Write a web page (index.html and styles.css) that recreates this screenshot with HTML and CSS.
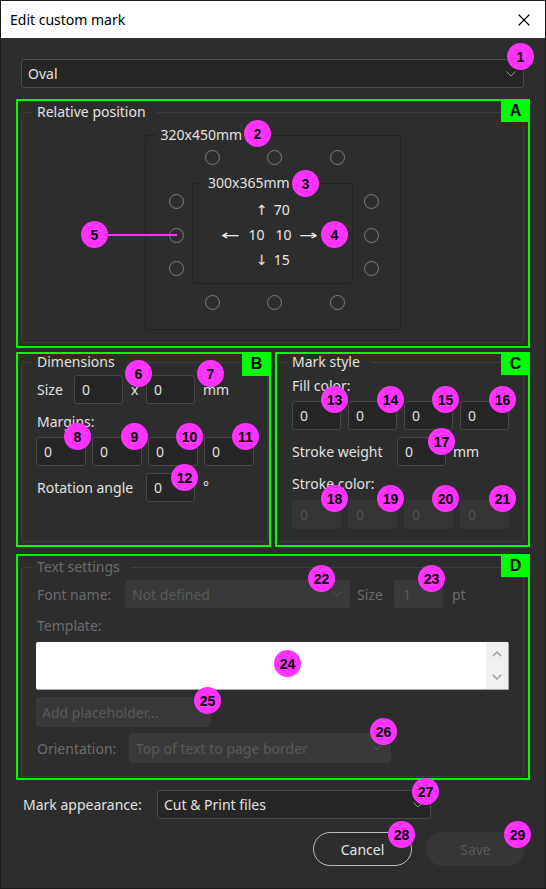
FILE: index.html
```html
<!DOCTYPE html>
<html lang="en">
<head>
<meta charset="utf-8">
<title>Edit custom mark</title>
<link rel="stylesheet" href="styles.css">
</head>
<body>
<div class="window">
  <div class="titlebar">
    <span class="title">Edit custom mark</span>
    <svg class="close" width="12" height="12" viewBox="0 0 12 12"><path d="M0.5 0.5 L11.5 11.5 M11.5 0.5 L0.5 11.5" stroke="#000" stroke-width="1.1" fill="none"/></svg>
  </div>

  <div class="content">
    <div class="combo main-combo">
      <span>Oval</span>
      <svg class="chev" width="10" height="6" viewBox="0 0 10 6"><polyline points="0.5,0.5 5,5 9.5,0.5" fill="none" stroke="#8c8c8c" stroke-width="1"/></svg>
    </div>

    <section class="hl hl-a">
      <span class="tag">A</span>
      <fieldset class="group group-a">
        <legend>Relative position</legend>
        <div class="diagram">
          <fieldset class="rect outer-rect">
            <legend>320x450mm</legend>
            <fieldset class="rect inner-rect">
              <legend>300x365mm</legend>
              <div class="offsets">
                <div class="off-row"><span class="va">↑</span><span>70</span></div>
                <div class="off-row mid"><span class="ha">←</span><span class="n1">10</span><span class="n2">10</span><span class="ha">→</span></div>
                <div class="off-row"><span class="va">↓</span><span>15</span></div>
              </div>
            </fieldset>
          </fieldset>
          <span class="pin t1"></span><span class="pin t2"></span><span class="pin t3"></span>
          <span class="pin l1"></span><span class="pin l2"></span><span class="pin l3"></span>
          <span class="pin r1"></span><span class="pin r2"></span><span class="pin r3"></span>
          <span class="pin bt1"></span><span class="pin bt2"></span><span class="pin bt3"></span>
        </div>
      </fieldset>
    </section>

    <div class="row-bc">
      <section class="hl hl-b">
        <span class="tag">B</span>
        <fieldset class="group group-b">
          <legend>Dimensions</legend>
          <div class="dims">
            <div class="frow size-row">
              <span class="lbl-size">Size</span>
              <span class="field">0</span>
              <span class="times">x</span>
              <span class="field">0</span>
              <span class="unit">mm</span>
            </div>
            <div class="line margins-lbl">Margins:</div>
            <div class="quad quad-b">
              <span class="field w50">0</span>
              <span class="field w50">0</span>
              <span class="field w50">0</span>
              <span class="field w50">0</span>
            </div>
            <div class="frow rot-row">
              <span class="lbl-rot">Rotation angle</span>
              <span class="field">0</span>
              <span class="deg">°</span>
            </div>
          </div>
        </fieldset>
      </section>

      <section class="hl hl-c">
        <span class="tag">C</span>
        <fieldset class="group group-c">
          <legend>Mark style</legend>
          <div class="mstyle">
            <div class="line fill-lbl">Fill color:</div>
            <div class="quad quad-c">
              <span class="field">0</span>
              <span class="field">0</span>
              <span class="field">0</span>
              <span class="field">0</span>
            </div>
            <div class="frow sw-row">
              <span class="lbl-sw">Stroke weight</span>
              <span class="field">0</span>
              <span class="unit2">mm</span>
            </div>
            <div class="line sc-lbl">Stroke color:</div>
            <div class="quad quad-c quad-dis">
              <span class="field dis">0</span>
              <span class="field dis">0</span>
              <span class="field dis">0</span>
              <span class="field dis">0</span>
            </div>
          </div>
        </fieldset>
      </section>
    </div>

    <section class="hl hl-d">
      <span class="tag">D</span>
      <fieldset class="group group-d">
        <legend>Text settings</legend>
        <div class="tset">
          <div class="frow font-row">
            <span class="lbl-font">Font name:</span>
            <div class="combo dcombo font-combo">
              <span>Not defined</span>
              <svg class="chev" width="10" height="6" viewBox="0 0 10 6"><polyline points="0.5,0.5 5,5 9.5,0.5" fill="none" stroke="#555" stroke-width="1"/></svg>
            </div>
            <span class="lbl-sz">Size</span>
            <span class="field dfield">1</span>
            <span class="pt">pt</span>
          </div>
          <div class="line tpl-lbl">Template:</div>
          <div class="textarea">
            <div class="scrollbar">
              <svg width="10" height="6" viewBox="0 0 10 6"><polyline points="0.8,5.2 5,1 9.2,5.2" fill="none" stroke="#a8a8a8" stroke-width="1.6"/></svg>
              <svg width="10" height="6" viewBox="0 0 10 6"><polyline points="0.8,0.8 5,5 9.2,0.8" fill="none" stroke="#a8a8a8" stroke-width="1.6"/></svg>
            </div>
          </div>
          <div class="addbtn">Add placeholder...</div>
          <div class="frow orient-row">
            <span class="lbl-orient">Orientation:</span>
            <div class="combo dcombo orient-combo">
              <span>Top of text to page border</span>
              <svg class="chev" width="10" height="6" viewBox="0 0 10 6"><polyline points="0.5,0.5 5,5 9.5,0.5" fill="none" stroke="#555" stroke-width="1"/></svg>
            </div>
          </div>
        </div>
      </fieldset>
    </section>

    <div class="frow appear-row">
      <span class="lbl-appear">Mark appearance:</span>
      <div class="combo appear-combo">
        <span>Cut &amp; Print files</span>
        <svg class="chev" width="10" height="6" viewBox="0 0 10 6"><polyline points="0.5,0.5 5,5 9.5,0.5" fill="none" stroke="#8c8c8c" stroke-width="1"/></svg>
      </div>
    </div>

    <div class="buttons">
      <div class="btn cancel">Cancel</div>
      <div class="btn save">Save</div>
    </div>
  </div>

  <div class="overlay">
    <span class="leader"></span>
    <span class="badge b1">1</span>
    <span class="badge b2">2</span>
    <span class="badge b3">3</span>
    <span class="badge b4">4</span>
    <span class="badge b5">5</span>
    <span class="badge b6">6</span>
    <span class="badge b7">7</span>
    <span class="badge b8">8</span>
    <span class="badge b9">9</span>
    <span class="badge b10">10</span>
    <span class="badge b11">11</span>
    <span class="badge b12">12</span>
    <span class="badge b13">13</span>
    <span class="badge b14">14</span>
    <span class="badge b15">15</span>
    <span class="badge b16">16</span>
    <span class="badge b17">17</span>
    <span class="badge b18">18</span>
    <span class="badge b19">19</span>
    <span class="badge b20">20</span>
    <span class="badge b21">21</span>
    <span class="badge b22">22</span>
    <span class="badge b23">23</span>
    <span class="badge b24">24</span>
    <span class="badge b25">25</span>
    <span class="badge b26">26</span>
    <span class="badge b27">27</span>
    <span class="badge b28">28</span>
    <span class="badge b29">29</span>
  </div>
</div>
</body>
</html>
```

FILE: styles.css
```css
* { box-sizing: border-box; }
html, body { margin: 0; padding: 0; background: #2d2d2d; }
body {
  font-family: "Noto Sans", "DejaVu Sans", sans-serif;
  font-size: 14px;
  color: #e2e2e2;
}
.window {
  position: relative;
  width: 546px;
  height: 889px;
  border: 1px solid #1b1b1b;
  background: #2d2d2d;
  overflow: hidden;
}
.titlebar {
  height: 37px;
  background: #ffffff;
  color: #000;
  display: flex;
  align-items: center;
  justify-content: space-between;
  padding: 0 15px 0 9px;
}
.title { line-height: 20px; }
.close { display: block; }

.content { padding: 0 15px; }

.combo {
  display: flex;
  align-items: center;
  justify-content: space-between;
  height: 29px;
  background: #262626;
  border: 1px solid #4a4a4a;
  border-radius: 3px;
  padding: 0 7px 0 6px;
  white-space: nowrap;
}
.chev { display: block; flex: none; }
.main-combo { margin: 21px 6px 0 5px; }

.hl { position: relative; border: 2px solid #00ff00; }
.tag {
  position: absolute;
  top: -2px;
  right: -2px;
  width: 29px;
  height: 23px;
  background: #00ff00;
  color: #000;
  font: bold 16px "Liberation Sans", Arial, sans-serif;
  display: flex;
  align-items: center;
  justify-content: center;
  z-index: 2;
}
.hl-b .tag { height: 24px; }

.group {
  margin: 0;
  padding: 0;
  border: 1px solid #3d3d3d;
  border-radius: 3px;
  min-width: 0;
}
.group > legend {
  margin-left: 10px;
  padding: 0 11px 0 5px;
  line-height: 16px;
}
.hl-a { margin-top: 11px; height: 249px; }
.group-a { margin: 3px 4px 3px 3px; height: 239px; }

.diagram { position: relative; width: 256px; height: 203px; margin: 7px auto 0; }
.rect {
  margin: 0;
  padding: 0;
  border: 1px solid #222222;
  border-radius: 3px;
  min-width: 0;
}
.rect > legend { margin-left: 10px; padding: 0 4px 0 5px; line-height: 16px; }
.outer-rect { width: 256px; height: 203px; }
.inner-rect { width: 161px; height: 109px; margin: 32px auto 0; }
.offsets { padding-top: 6px; display: flex; flex-direction: column; align-items: center; color: #e8e8e8; }
.off-row { display: flex; align-items: center; gap: 6px; height: 25px; padding-left: 1px; }
.off-row.mid { gap: 0; padding-left: 0; padding-right: 6px; }
.va { font-family: "DejaVu Sans", sans-serif; font-size: 14px; }
.ha {
  display: inline-block;
  width: 19px;
  text-align: center;
  font-family: "DejaVu Sans", sans-serif;
  transform: scaleX(1.6);
}
.n1 { margin-left: 8px; }
.n2 { margin-left: 11px; margin-right: 7px; }

.pin {
  position: absolute;
  width: 15px;
  height: 15px;
  border: 1px solid #7c7c7c;
  border-radius: 50%;
}
.t1 { left: 60.5px; top: 22.5px; }
.t2 { left: 122.5px; top: 22.5px; }
.t3 { left: 185.5px; top: 22.5px; }
.bt1 { left: 60.5px; top: 167.5px; }
.bt2 { left: 122.5px; top: 167.5px; }
.bt3 { left: 185.5px; top: 167.5px; }
.l1 { left: 24px; top: 66.5px; }
.l2 { left: 24px; top: 100.5px; }
.l3 { left: 24px; top: 133.5px; }
.r1 { left: 219px; top: 66.5px; }
.r2 { left: 219px; top: 100.5px; }
.r3 { left: 219px; top: 133.5px; }

.row-bc { display: flex; gap: 4px; margin-top: 4px; }
.hl-b, .hl-c { width: 255px; height: 195px; }
.group-b { margin: 0 1px 3px 3px; height: 188px; }
.group-c { margin: 0 4px 3px 0; height: 188px; }
.group-c > legend { margin-left: 9px; }

.frow { display: flex; align-items: center; }
.line { line-height: 16px; white-space: nowrap; }
.field {
  flex: none;
  width: 49px;
  height: 29px;
  background: #262626;
  border: 1px solid #474747;
  border-radius: 3px;
  padding-left: 7px;
  display: flex;
  align-items: center;
}
.field.w50 { width: 50px; }
.field.dis { background: #353535; border-color: #353535; color: #525252; }

.dims { padding-left: 15px; }
.size-row { margin-top: 5px; }
.lbl-size { width: 37px; }
.times { margin-left: 8px; width: 7px; }
.size-row .times + .field { margin-left: 8px; }
.unit { margin-left: 8px; }
.margins-lbl { margin-top: 10px; }
.quad { display: flex; }
.quad-b { gap: 6px; margin-top: 7px; margin-left: -1px; }
.rot-row { margin-top: 7px; }
.lbl-rot { width: 109px; white-space: nowrap; }
.deg { margin-left: 8px; margin-top: -2px; }

.mstyle { padding-left: 14px; }
.fill-lbl { margin-top: 8px; }
.quad-c { gap: 7px; margin-top: 7px; }
.sw-row { margin-top: 7px; }
.lbl-sw { width: 105px; white-space: nowrap; }
.unit2 { margin-left: 7px; }
.sc-lbl { margin-top: 10px; }
.quad-dis { margin-top: 8px; }

.hl-d { margin-top: 7px; height: 226px; }
.group-d { margin: 3px 4px 2px 3px; height: 218px; }
.group-d > legend { color: #6b6b6b; }
.tset { padding-left: 15px; color: #6b6b6b; }
.font-row { margin-top: 5px; }
.lbl-font { width: 88px; white-space: nowrap; }
.dcombo { background: #393939; border-color: #393939; color: #5a5a5a; }
.font-combo { width: 225px; height: 28px; }
.lbl-sz { margin-left: 7px; width: 37px; }
.dfield { height: 28px; width: 49px; background: #393939; border-color: #393939; color: #5a5a5a; padding-left: 8px; }
.pt { margin-left: 9px; }
.tpl-lbl { margin-top: 10px; }
.textarea {
  margin-top: 8px;
  margin-left: -1px;
  width: 473px;
  height: 48px;
  background: #ffffff;
  border-right: 1px solid #a9a9a9;
  border-bottom: 1px solid #a9a9a9;
  border-radius: 2px;
  display: flex;
  justify-content: flex-end;
}
.scrollbar {
  width: 22px;
  height: 47px;
  background: #f0f0f0;
  display: flex;
  flex-direction: column;
  align-items: center;
  justify-content: space-between;
  padding: 9px 0 9px;
}
.scrollbar svg { display: block; }
.addbtn {
  margin-top: 7px;
  margin-left: -1px;
  width: 175px;
  height: 30px;
  background: #383838;
  border-radius: 3px;
  color: #5a5a5a;
  padding-left: 6px;
  display: flex;
  align-items: center;
}
.orient-row { margin-top: 6px; }
.lbl-orient { width: 92px; }
.orient-combo { width: 262px; height: 30px; padding-right: 8px; }

.appear-row { margin-top: 10px; }
.lbl-appear { margin-left: 7px; width: 134px; white-space: nowrap; }
.appear-combo { width: 274px; }

.buttons { display: flex; justify-content: flex-end; gap: 14px; margin-top: 13px; margin-right: 5px; }
.btn {
  width: 99px;
  height: 34px;
  border-radius: 17px;
  display: flex;
  align-items: center;
  justify-content: center;
}
.cancel { border: 1px solid #bdbdbd; color: #e6e6e6; }
.save { background: #363636; color: #5a5a5a; }

.overlay {
  position: absolute;
  left: -1px;
  top: -1px;
  width: 546px;
  height: 889px;
  pointer-events: none;
  z-index: 5;
}
.leader { position: absolute; left: 106px; top: 234px; width: 71px; height: 2px; background: #ff33ff; }
.badge {
  position: absolute;
  width: 27px;
  height: 27px;
  border-radius: 50%;
  background: #ff33ff;
  color: #000;
  font: bold 14px "Liberation Sans", Arial, sans-serif;
  display: flex;
  align-items: center;
  justify-content: center;
}
.b1 { left: 507px; top: 43px; }
.b2 { left: 244px; top: 120px; }
.b3 { left: 292px; top: 170px; }
.b4 { left: 321px; top: 221px; }
.b5 { left: 81px; top: 221px; }
.b6 { left: 125px; top: 360px; }
.b7 { left: 197px; top: 360px; }
.b8 { left: 64px; top: 423px; }
.b9 { left: 121px; top: 423px; }
.b10 { left: 176px; top: 423px; }
.b11 { left: 232px; top: 423px; }
.b12 { left: 171px; top: 464px; }
.b13 { left: 321px; top: 386px; }
.b14 { left: 377px; top: 386px; }
.b15 { left: 432px; top: 386px; }
.b16 { left: 489px; top: 386px; }
.b17 { left: 428px; top: 428px; }
.b18 { left: 321px; top: 485px; }
.b19 { left: 377px; top: 485px; }
.b20 { left: 432px; top: 485px; }
.b21 { left: 489px; top: 485px; }
.b22 { left: 308px; top: 565px; }
.b23 { left: 418px; top: 565px; }
.b24 { left: 274px; top: 650px; }
.b25 { left: 194px; top: 687px; }
.b26 { left: 370px; top: 718px; }
.b27 { left: 412px; top: 778px; }
.b28 { left: 388px; top: 821px; }
.b29 { left: 504px; top: 821px; }
```
